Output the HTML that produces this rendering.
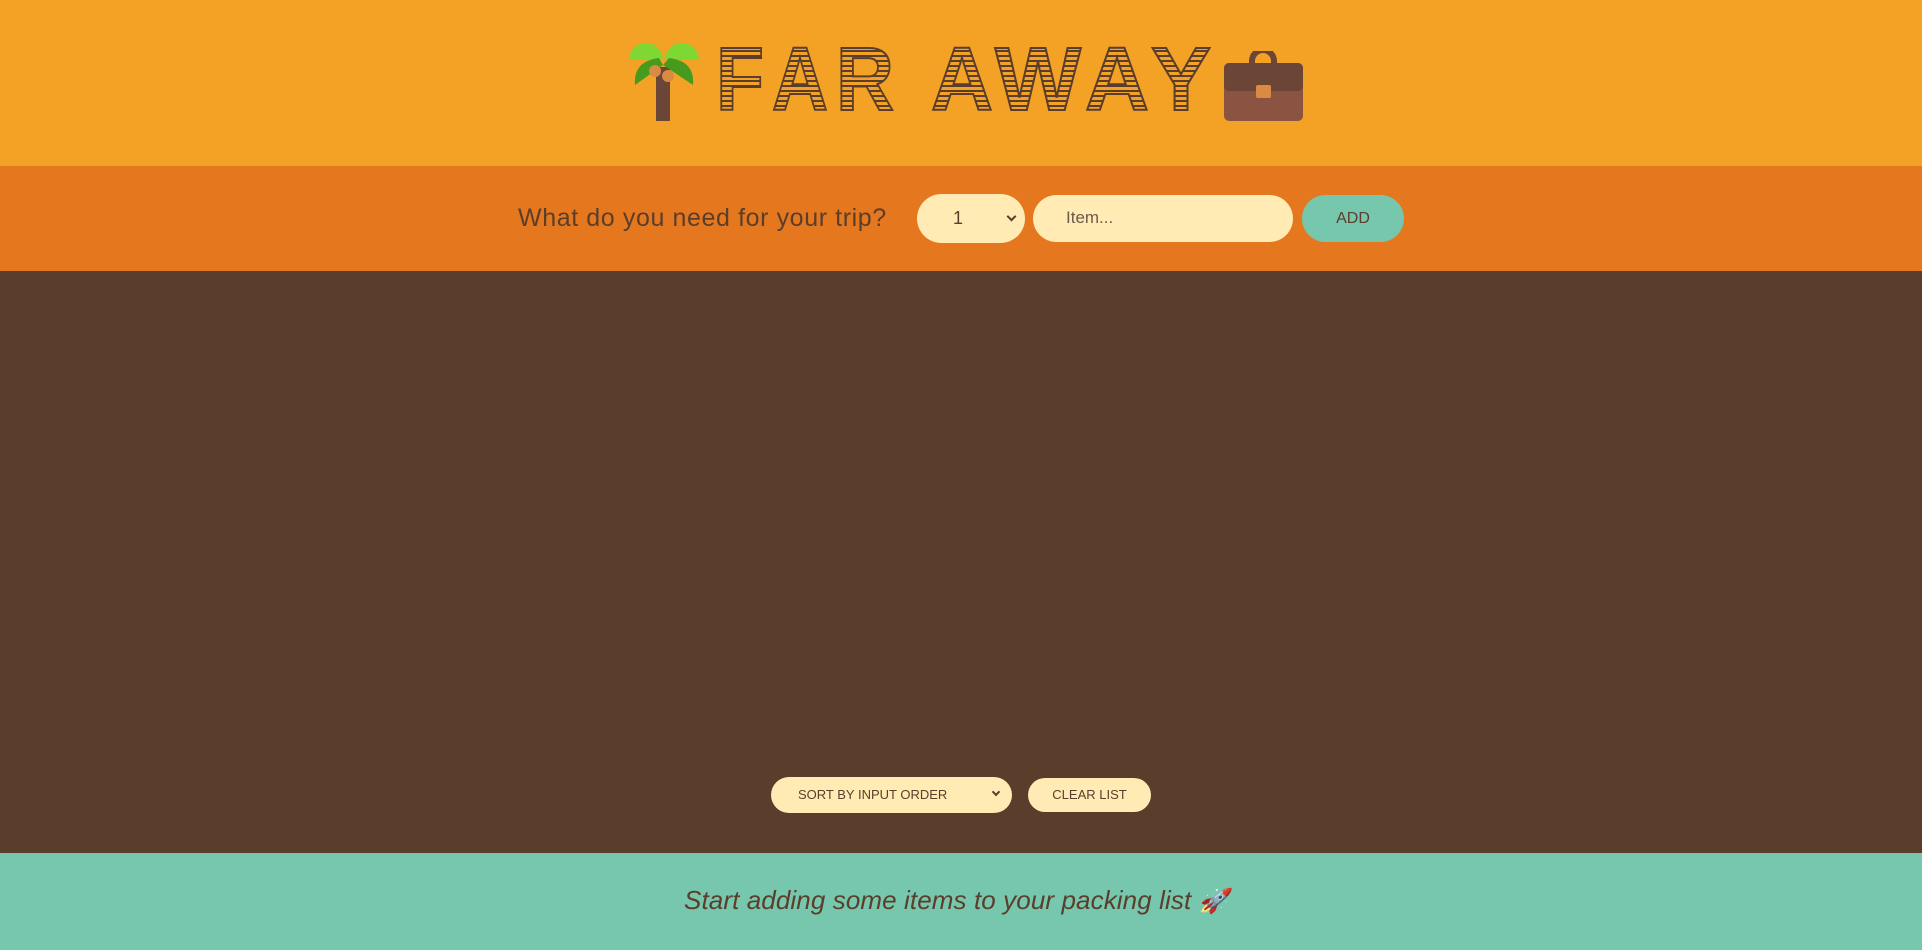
<!DOCTYPE html>
<html><head><meta charset="utf-8"><style>
*{margin:0;padding:0;box-sizing:border-box}
body{width:1922px;height:950px;overflow:hidden;font-family:"Liberation Sans",sans-serif;background:#5a3e2b;position:relative}
.hdr{position:absolute;left:0;top:0;width:1922px;height:166px;background:#f4a226}
.frm{position:absolute;left:0;top:166px;width:1922px;height:105px;background:#e5771f}
.lst{position:absolute;left:0;top:271px;width:1922px;height:582px;background:#5a3e2b}
.ftr{position:absolute;left:0;top:853px;width:1922px;height:97px;background:#76c7ad}
.abs{position:absolute}
.pill{position:absolute;background:#ffebb3;border-radius:30px;color:#5a3e2b}
.chev{position:absolute;width:7px;height:7px;border-right:2px solid #5a3e2b;border-bottom:2px solid #5a3e2b;transform:rotate(45deg)}
</style></head><body>
<div class="hdr">
<svg class="abs" style="left:629px;top:43px" width="70" height="78" viewBox="0 0 70 78">
<path d="M0 17 A17 17 0 0 1 34 17 Z" fill="#7fd733"/>
<path d="M36 17 A17 17 0 0 1 70 17 Z" fill="#7fd733"/>
<rect x="27" y="24" width="14" height="54" fill="#6b4535"/>
<path d="M6 42 Q4 18 30 15 L34 22 Z" fill="#469b1f"/>
<path d="M64 42 Q66 18 40 15 L34 22 Z" fill="#469b1f"/>
<circle cx="26" cy="28" r="6" fill="#d98b44"/>
<circle cx="39" cy="33" r="6" fill="#d98b44"/>
</svg>
<svg class="abs" style="left:0;top:0" width="1922" height="166">
<defs>
<pattern id="st" width="8" height="5" patternUnits="userSpaceOnUse">
<rect width="8" height="5" fill="#f4a226"/><rect y="0" width="8" height="2" fill="#5a3e2b"/>
</pattern>
</defs>
<g font-family="Liberation Sans, sans-serif" font-size="90" font-weight="bold" fill="url(#st)" stroke="#5a3e2b" stroke-width="2">
<text x="716" y="110" textLength="48" lengthAdjust="spacingAndGlyphs">F</text>
<text x="772" y="110" textLength="56" lengthAdjust="spacingAndGlyphs">A</text>
<text x="836" y="110" textLength="58" lengthAdjust="spacingAndGlyphs">R</text>
<text x="931" y="110" textLength="62" lengthAdjust="spacingAndGlyphs">A</text>
<text x="995" y="110" textLength="86" lengthAdjust="spacingAndGlyphs">W</text>
<text x="1085" y="110" textLength="64" lengthAdjust="spacingAndGlyphs">A</text>
<text x="1151" y="110" textLength="60" lengthAdjust="spacingAndGlyphs">Y</text>
</g>
</svg>
<svg class="abs" style="left:1224px;top:51px" width="79" height="70" viewBox="0 0 79 70">
<path d="M28 18 V10 A11 11 0 0 1 50 10 V18" fill="none" stroke="#6b4535" stroke-width="6"/>
<rect x="0" y="12" width="79" height="58" rx="5" fill="#8b5442"/>
<path d="M0 17 a5 5 0 0 1 5 -5 h69 a5 5 0 0 1 5 5 v18 a5 5 0 0 1 -5 5 h-69 a5 5 0 0 1 -5 -5z" fill="#6b4535"/>
<rect x="32" y="34" width="15" height="13" rx="2" fill="#d98b44"/>
</svg>
</div>
<div class="frm">
<div class="abs" style="left:518px;top:38px;font-size:25px;letter-spacing:0.6px;color:#5a3e2b;white-space:nowrap">What do you need for your trip?</div>
<div class="pill" style="left:917px;top:28px;width:108px;height:49px;font-size:18px;"><span class="abs" style="left:36px;top:14px">1</span><span class="chev" style="left:91px;top:19px"></span></div>
<div class="pill" style="left:1033px;top:29px;width:260px;height:47px;font-size:17px;color:#6a5a4a"><span class="abs" style="left:33px;top:13px">Item...</span></div>
<div class="pill" style="left:1302px;top:29px;width:102px;height:47px;background:#76c7ad;font-size:16px;text-align:center;line-height:47px">ADD</div>
</div>
<div class="lst">
<div class="pill" style="left:771px;top:506px;width:241px;height:36px;font-size:13px;line-height:36px"><span style="margin-left:27px">SORT BY INPUT ORDER</span><span class="chev" style="left:222px;top:12px;width:6px;height:6px"></span></div>
<div class="pill" style="left:1028px;top:507px;width:123px;height:34px;font-size:13px;line-height:34px;text-align:center">CLEAR LIST</div>
</div>
<div class="ftr">
<div class="abs" style="left:684px;top:32px;font-size:26px;letter-spacing:0.1px;font-style:italic;color:#5a3e2b;white-space:nowrap">Start adding some items to your packing list <span style="font-size:24px">🚀</span></div>
</div>
</body></html>
